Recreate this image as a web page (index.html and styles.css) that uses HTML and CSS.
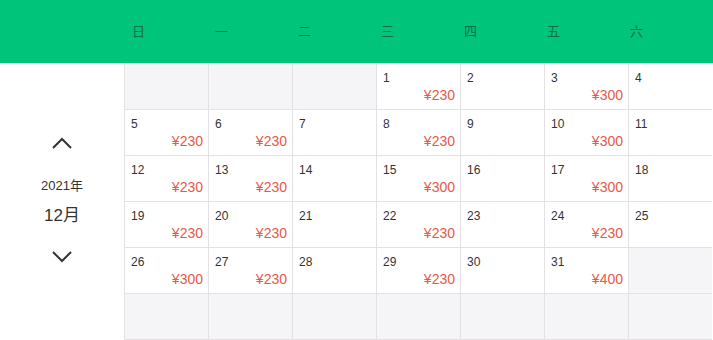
FILE: index.html
```html
<!DOCTYPE html>
<html lang="zh-CN">
<head>
<meta charset="utf-8">
<link rel="stylesheet" href="styles.css">
</head>
<body>
<div class="header">
  <span class="wd">日</span><span class="wd">一</span><span class="wd">二</span><span class="wd">三</span><span class="wd">四</span><span class="wd">五</span><span class="wd">六</span>
</div>
<div class="main">
  <div class="side">
    <svg class="chev up" width="20" height="12" viewBox="0 0 20 12"><polyline points="1,11 10,2 19,11" fill="none" stroke="#333" stroke-width="2"/></svg>
    <div class="year">2021年</div>
    <div class="month">12月</div>
    <svg class="chev down" width="20" height="12" viewBox="0 0 20 12"><polyline points="1,1 10,10 19,1" fill="none" stroke="#333" stroke-width="2"/></svg>
  </div>
  <div class="grid">
    <div class="cell empty"></div><div class="cell empty"></div><div class="cell empty"></div>
    <div class="cell"><div class="num">1</div><div class="price">¥230</div></div>
    <div class="cell"><div class="num">2</div></div>
    <div class="cell"><div class="num">3</div><div class="price">¥300</div></div>
    <div class="cell"><div class="num">4</div></div>

    <div class="cell"><div class="num">5</div><div class="price">¥230</div></div>
    <div class="cell"><div class="num">6</div><div class="price">¥230</div></div>
    <div class="cell"><div class="num">7</div></div>
    <div class="cell"><div class="num">8</div><div class="price">¥230</div></div>
    <div class="cell"><div class="num">9</div></div>
    <div class="cell"><div class="num">10</div><div class="price">¥300</div></div>
    <div class="cell"><div class="num">11</div></div>

    <div class="cell"><div class="num">12</div><div class="price">¥230</div></div>
    <div class="cell"><div class="num">13</div><div class="price">¥230</div></div>
    <div class="cell"><div class="num">14</div></div>
    <div class="cell"><div class="num">15</div><div class="price">¥300</div></div>
    <div class="cell"><div class="num">16</div></div>
    <div class="cell"><div class="num">17</div><div class="price">¥300</div></div>
    <div class="cell"><div class="num">18</div></div>

    <div class="cell"><div class="num">19</div><div class="price">¥230</div></div>
    <div class="cell"><div class="num">20</div><div class="price">¥230</div></div>
    <div class="cell"><div class="num">21</div></div>
    <div class="cell"><div class="num">22</div><div class="price">¥230</div></div>
    <div class="cell"><div class="num">23</div></div>
    <div class="cell"><div class="num">24</div><div class="price">¥230</div></div>
    <div class="cell"><div class="num">25</div></div>

    <div class="cell"><div class="num">26</div><div class="price">¥300</div></div>
    <div class="cell"><div class="num">27</div><div class="price">¥230</div></div>
    <div class="cell"><div class="num">28</div></div>
    <div class="cell"><div class="num">29</div><div class="price">¥230</div></div>
    <div class="cell"><div class="num">30</div></div>
    <div class="cell"><div class="num">31</div><div class="price">¥400</div></div>
    <div class="cell empty"></div>

    <div class="cell empty"></div><div class="cell empty"></div><div class="cell empty"></div><div class="cell empty"></div><div class="cell empty"></div><div class="cell empty"></div><div class="cell empty"></div>
  </div>
</div>
</body>
</html>
```

FILE: styles.css
```css
* { box-sizing: border-box; }
html, body { margin: 0; padding: 0; background: #fff; }
body {
  font-family: "Liberation Sans", "Noto Sans CJK SC", sans-serif;
  color: #333;
  width: 713px;
  height: 340px;
  overflow: hidden;
}
.header {
  height: 63px;
  background: #00c47a;
  display: flex;
  align-items: center;
  padding-left: 132px;
}
.wd {
  width: 83px;
  font-size: 13px;
  line-height: 16px;
  color: #0e7045;
}
.main {
  display: flex;
}
.side {
  width: 124px;
  display: flex;
  flex-direction: column;
  align-items: center;
  padding-top: 74px;
}
.chev { display: block; }
.year {
  margin-top: 29px;
  font-size: 13px;
  line-height: 16px;
  color: #333;
}
.month {
  margin-top: 12px;
  font-size: 17px;
  line-height: 20px;
  color: #333;
}
.chev.down { margin-top: 25px; }
.grid {
  display: grid;
  grid-template-columns: repeat(7, 84px);
  grid-auto-rows: 46px;
  border-top: 1px solid #e6f5ee;
}
.cell {
  border-left: 1px solid #e3e1e4;
  border-bottom: 1px solid #e3e1e4;
  padding: 7px 5px 0 6px;
  background: #fff;
}
.cell.empty { background: #f5f4f6; }
.num {
  font-size: 12px;
  line-height: 14px;
  color: #333;
}
.price {
  margin-top: 2px;
  font-size: 14px;
  line-height: 16px;
  color: #e8584a;
  text-align: right;
}
```
